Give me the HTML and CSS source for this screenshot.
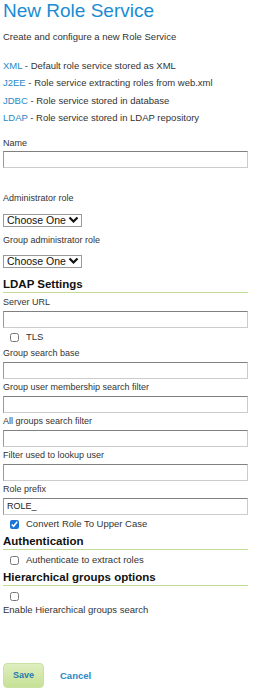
FILE: index.html
```html
<!DOCTYPE html>
<html lang="en">
<head>
    <meta charset="UTF-8">
    <meta name="viewport" content="width=device-width, initial-scale=1.0">
    <title>New Role Service</title>
    <link rel="stylesheet" href="styles.css">
</head>
<body>
    <div class="page">
        <h1>New Role Service</h1>
        <p class="description">Create and configure a new Role Service</p>

        <ul class="service-types">
            <li><a href="#">XML</a> - Default role service stored as XML</li>
            <li><a href="#">J2EE</a> - Role service extracting roles from web.xml</li>
            <li><a href="#">JDBC</a> - Role service stored in database</li>
            <li><a href="#">LDAP</a> - Role service stored in LDAP repository</li>
        </ul>

        <form class="role-form">
            <div class="field name-field">
                <label for="name">Name</label>
                <input type="text" id="name">
            </div>

            <div class="field select-field admin-field">
                <label for="adminRole">Administrator role</label>
                <span class="select-box">
                    <select id="adminRole"><option>Choose One</option></select>
                    <svg width="11" height="8" viewBox="0 0 11 8"><path d="M1.5 1.5 L5.5 5.5 L9.5 1.5" fill="none" stroke="#111" stroke-width="2.2"/></svg>
                </span>
            </div>
            <div class="field select-field">
                <label for="groupAdminRole">Group administrator role</label>
                <span class="select-box">
                    <select id="groupAdminRole"><option>Choose One</option></select>
                    <svg width="11" height="8" viewBox="0 0 11 8"><path d="M1.5 1.5 L5.5 5.5 L9.5 1.5" fill="none" stroke="#111" stroke-width="2.2"/></svg>
                </span>
            </div>

            <h3 class="section-title ldap-title">LDAP Settings</h3>
            <div class="field">
                <label for="serverUrl">Server URL</label>
                <input type="text" id="serverUrl">
            </div>
            <div class="check-row">
                <input type="checkbox" id="tls">
                <label for="tls">TLS</label>
            </div>
            <div class="field">
                <label for="groupSearchBase">Group search base</label>
                <input type="text" id="groupSearchBase">
            </div>
            <div class="field">
                <label for="groupMembership">Group user membership search filter</label>
                <input type="text" id="groupMembership">
            </div>
            <div class="field">
                <label for="allGroups">All groups search filter</label>
                <input type="text" id="allGroups">
            </div>
            <div class="field">
                <label for="lookupUser">Filter used to lookup user</label>
                <input type="text" id="lookupUser">
            </div>
            <div class="field">
                <label for="rolePrefix">Role prefix</label>
                <input type="text" id="rolePrefix" value="ROLE_">
            </div>
            <div class="check-row">
                <input type="checkbox" id="upperCase" checked>
                <label for="upperCase">Convert Role To Upper Case</label>
            </div>

            <h3 class="section-title">Authentication</h3>
            <div class="check-row">
                <input type="checkbox" id="authenticate">
                <label for="authenticate">Authenticate to extract roles</label>
            </div>

            <h3 class="section-title">Hierarchical groups options</h3>
            <div class="check-block">
                <input type="checkbox" id="hierarchical">
                <label for="hierarchical">Enable Hierarchical groups search</label>
            </div>

            <div class="button-group">
                <button type="button" class="save">Save</button>
                <a href="#" class="cancel">Cancel</a>
            </div>
        </form>
    </div>
</body>
</html>
```

FILE: styles.css
```css
body {
    margin: 0;
    font-family: "Liberation Sans", Arial, sans-serif;
    color: #333;
    background: #fff;
}
.page {
    padding: 0 3px;
    width: 245px;
}
h1 {
    margin: 0;
    font-size: 19px;
    line-height: 22px;
    font-weight: normal;
    color: #1a8cd3;
}
.description {
    margin: 8px 0 0;
    font-size: 9.5px;
    line-height: 14px;
}
.service-types {
    list-style: none;
    margin: 13px 0 0;
    padding: 0;
    font-size: 9.5px;
    line-height: 17.4px;
}
a {
    color: #2a88c6;
    text-decoration: none;
}
.role-form {
    margin-top: 10px;
}
label {
    display: block;
    font-size: 9px;
    line-height: 12px;
}
input[type="text"] {
    display: block;
    width: 100%;
    height: 17px;
    margin: 3px 0 2px;
    padding: 0 3px;
    box-sizing: border-box;
    border: 1px solid #ccc;
    border-top-color: #808080;
    border-left-color: #9a9a9a;
    font-family: inherit;
    font-size: 9px;
    color: #222;
    outline: none;
}
.name-field input[type="text"] {
    margin-top: 2px;
}
.admin-field {
    margin-top: 24px;
}
.select-field label {
    margin-bottom: 10px;
}
.select-field + .select-field {
    margin-top: 7px;
}
.select-field + .select-field label {
    margin-bottom: 9px;
}
.select-box {
    display: flex;
    width: max-content;
    align-items: center;
    gap: 2px;
    height: 13px;
    padding: 0 2px 0 3px;
    border: 1px solid #999;
    box-sizing: border-box;
}
.select-box select {
    appearance: none;
    -webkit-appearance: none;
    border: none;
    padding: 0;
    margin: 0;
    background: transparent;
    font-family: inherit;
    font-size: 10.5px;
    line-height: 11px;
    color: #111;
    outline: none;
}
.section-title {
    margin: 0;
    font-size: 11.5px;
    line-height: 14px;
    color: #111;
    border-bottom: 1px solid #c2de95;
    padding-bottom: 1px;
}
.ldap-title {
    margin-top: 9px;
    margin-bottom: 3px;
}
.check-row {
    display: flex;
    align-items: center;
    height: 15px;
    margin: 1px 0 2px;
}
.check-row + .section-title {
    margin-top: 1px;
}
.section-title + .check-row {
    margin-top: 3px;
}
input[type="checkbox"] {
    width: 9px;
    height: 9px;
    margin: 0 7px 0 7px;
    accent-color: #1a73d6;
}
.check-row label {
    font-size: 9.5px;
}
.check-block {
    margin-top: 6px;
}
.check-block input[type="checkbox"] {
    display: block;
    margin: 0 0 3px 7px;
}
.check-block label {
    font-size: 9.5px;
}
.button-group {
    display: flex;
    align-items: center;
    gap: 16px;
    margin-top: 47px;
}
.save {
    width: 41px;
    height: 25px;
    padding: 0;
    border: 1px solid #c9e2a4;
    border-radius: 4px;
    background: linear-gradient(#deeebf, #c6e196);
    color: #2878ad;
    font-family: inherit;
    font-size: 9px;
    font-weight: bold;
    cursor: pointer;
}
.cancel {
    font-size: 9.5px;
    font-weight: bold;
    color: #2a88c6;
}
```
